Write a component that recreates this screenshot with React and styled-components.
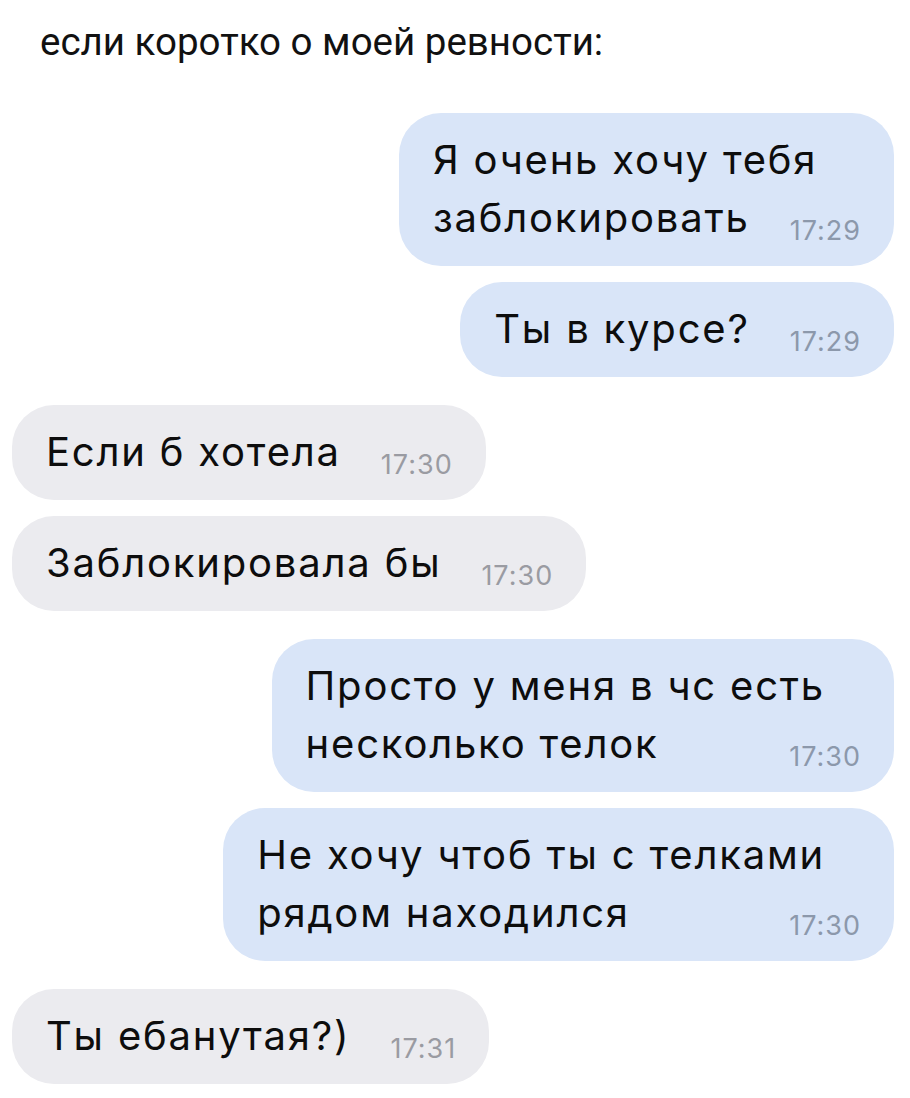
import React from "react"
import styled, { createGlobalStyle } from "styled-components"

const messages = [
  { side: "out", lines: ["Я очень хочу тебя", "заблокировать"], time: "17:29" },
  { side: "out", lines: ["Ты в курсе?"], time: "17:29" },
  { side: "in", lines: ["Если б хотела"], time: "17:30" },
  { side: "in", lines: ["Заблокировала бы"], time: "17:30" },
  { side: "out", lines: ["Просто у меня в чс есть", "несколько телок"], time: "17:30" },
  { side: "out", lines: ["Не хочу чтоб ты с телками", "рядом находился"], time: "17:30" },
  { side: "in", lines: ["Ты ебанутая?)"], time: "17:31" },
]

const App = () => {
  return (
    <>
      <GlobalStyle />
      <Page>
        <Title>если коротко о моей ревности:</Title>
        <Chat>
          {messages.map((msg, i) => {
            const prev = messages[i - 1]
            const gap = !prev ? 0 : prev.side === msg.side ? 16 : 28
            const last = msg.lines[msg.lines.length - 1]
            return (
              <Bubble key={i} $side={msg.side} $gap={gap}>
                {msg.lines.slice(0, -1).map((line, j) => (
                  <Line key={j}>{line}</Line>
                ))}
                <LastRow>
                  <Text>{last}</Text>
                  <Time $side={msg.side}>{msg.time}</Time>
                </LastRow>
              </Bubble>
            )
          })}
        </Chat>
      </Page>
    </>
  )
}

export default App

const GlobalStyle = createGlobalStyle`
  html, body {
    margin: 0;
    padding: 0;
    background: #fff;
  }
`

const Page = styled.div`
  width: 910px;
  min-height: 1098px;
  box-sizing: border-box;
  padding: 20px 16px 0 12px;
  background: #fff;
`

const Title = styled.div`
  font-family: Roboto, "Noto Sans", sans-serif;
  font-size: 38.5px;
  line-height: 44px;
  color: #111;
  padding-left: 28px;
`

const Chat = styled.div`
  display: flex;
  flex-direction: column;
  margin-top: 49px;
`

const Bubble = styled.div`
  align-self: ${({ $side }) => ($side === "out" ? "flex-end" : "flex-start")};
  margin-top: ${({ $gap }) => $gap}px;
  display: flex;
  flex-direction: column;
  padding: 18px 33px 19px 34px;
  border-radius: 42px;
  background: ${({ $side }) => ($side === "out" ? "#d9e5f8" : "#ebebef")};
  font-family: Inter, "Noto Sans", sans-serif;
  font-size: 40px;
  line-height: 58px;
  letter-spacing: 1.8px;
  color: #0d0d0d;
`

const Line = styled.div`
  padding-right: 36px;
  white-space: nowrap;
`

const LastRow = styled.div`
  display: flex;
  align-items: flex-end;
`

const Text = styled.span`
  white-space: nowrap;
`

const Time = styled.span`
  margin-left: auto;
  padding-left: 40px;
  font-size: 27px;
  line-height: normal;
  letter-spacing: 1px;
  color: ${({ $side }) => ($side === "out" ? "#8c98ab" : "#9a9ba2")};
  white-space: nowrap;
`
